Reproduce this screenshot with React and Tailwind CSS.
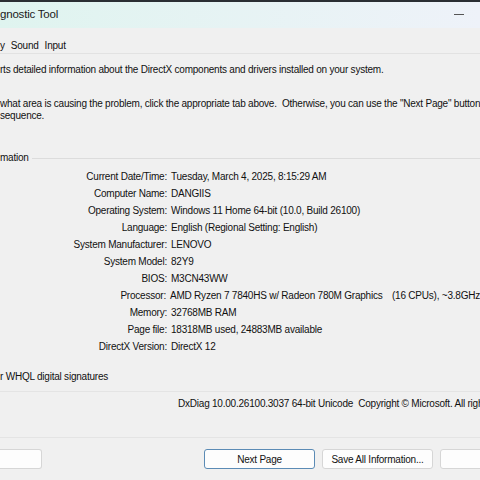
export default function App() {

    const rows = [
        ["Current Date/Time:", "Tuesday, March 4, 2025, 8:15:29 AM"],
        ["Computer Name:", "DANGIIS"],
        ["Operating System:", "Windows 11 Home 64-bit (10.0, Build 26100)"],
        ["Language:", "English (Regional Setting: English)"],
        ["System Manufacturer:", "LENOVO"],
        ["System Model:", "82Y9"],
        ["BIOS:", "M3CN43WW"],
        ["Processor:", "AMD Ryzen 7 7840HS w/ Radeon 780M Graphics"],
        ["Memory:", "32768MB RAM"],
        ["Page file:", "18318MB used, 24883MB available"],
        ["DirectX Version:", "DirectX 12"],
    ]

    return (
        <div
            className="w-[480px] h-[480px] overflow-hidden bg-[#f0f0f0] text-[#111] text-[10px] tracking-[-0.22px] flex flex-col whitespace-nowrap"
            style={{ fontFamily: '"Liberation Sans", Arial, sans-serif' }}
        >
            <div className="h-[2px] bg-[#2a2e33] shrink-0" />

            {/* title bar */}
            <div className="h-[26px] shrink-0 flex items-center justify-between bg-gradient-to-r from-[#dff4ef] to-[#eef2f9]">
                <span className="text-[11.5px] tracking-[-0.2px] text-[#1a1a1a]">gnostic Tool</span>
                <div className="w-[10px] h-px bg-[#555] mr-[16px] mb-[1px]" />
            </div>

            {/* tabs */}
            <div className="h-[26px] shrink-0 border-b border-[#e2e2e2] flex items-center pt-[10px] gap-[6px]">
                <span>y</span>
                <span>Sound</span>
                <span>Input</span>
            </div>

            <div className="mt-[10px] leading-[12px]">
                rts detailed information about the DirectX components and drivers installed on your system.
            </div>

            <div className="mt-[22px] leading-[12px]">
                what area is causing the problem, click the appropriate tab above.&nbsp; Otherwise, you can use the "Next Page" button below to visit each page in sequence.
            </div>
            <div className="leading-[12px]">sequence.</div>

            {/* group */}
            <div className="mt-[30px] flex items-center gap-[3px] leading-[12px]">
                <span>mation</span>
                <div className="flex-1 h-px bg-[#dcdcdc]" />
            </div>

            <div className="mt-[4px] flex flex-col">
                {rows.map(([label, value]) => (
                    <div key={label} className="h-[17px] shrink-0 flex items-center">
                        <span className="w-[167px] text-right">{label}</span>
                        <span className="ml-[4px] flex">
                            {label === "Processor:" ? (
                                <>
                                    <span className="w-[222px]">{value}</span>
                                    <span>(16 CPUs), ~3.8GHz</span>
                                </>
                            ) : (
                                value
                            )}
                        </span>
                    </div>
                ))}
            </div>

            <div className="mt-[16px] leading-[12px]">r WHQL digital signatures</div>

            <div className="mt-[8px] h-px shrink-0 bg-[#e4e4e4]" />

            <div className="mt-[6px] pl-[178px] leading-[12px]">
                DxDiag 10.00.26100.3037 64-bit Unicode&nbsp; Copyright © Microsoft. All rights reserved.
            </div>

            <div className="mt-[27px] h-px shrink-0 bg-[#e4e4e4]" />

            {/* buttons */}
            <div className="mt-[11px] flex items-center shrink-0">
                <button className="w-[42px] h-[20px] shrink-0 bg-[#fdfdfd] border border-[#d6d6d6] rounded-r-[3px] border-l-0" />
                <button className="ml-[162px] w-[111px] h-[20px] shrink-0 bg-[#fdfdfd] border border-[#5b8bb5] rounded-[3px]">
                    Next Page
                </button>
                <button className="ml-[7px] w-[111px] h-[20px] shrink-0 bg-[#fdfdfd] border border-[#d6d6d6] rounded-[3px]">
                    Save All Information...
                </button>
                <button className="ml-[7px] w-[60px] h-[20px] bg-[#fdfdfd] border border-[#d6d6d6] rounded-[3px] shrink-0" />
            </div>
        </div>
    )
}
